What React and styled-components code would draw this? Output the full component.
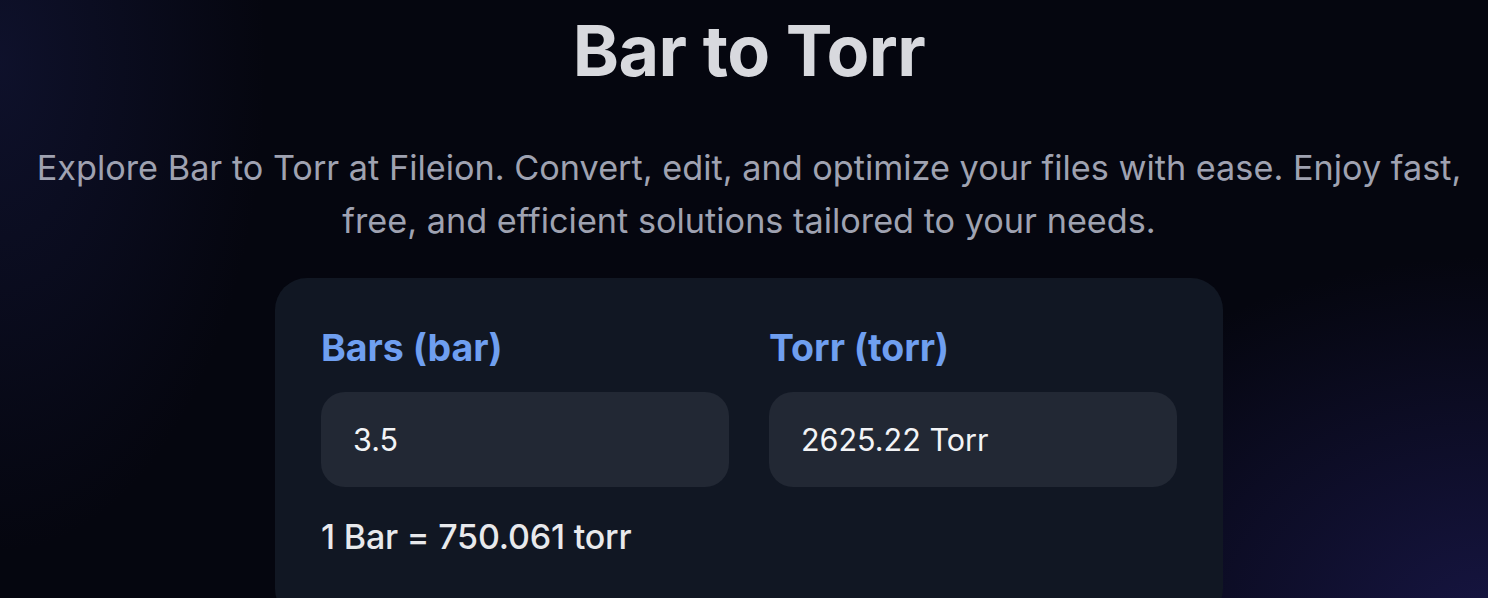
import React from "react";
import styled, { createGlobalStyle } from "styled-components";

const GlobalStyle = createGlobalStyle`
  html, body {
    margin: 0;
    padding: 0;
    background: #05060f;
  }
  body {
    font-family: Inter, "Noto Sans", sans-serif;
  }
`;

const Page = styled.div`
  min-height: 598px;
  box-sizing: border-box;
  padding: 12px 0 0 10px;
  display: flex;
  flex-direction: column;
  align-items: center;
  overflow: hidden;
  background:
    radial-gradient(ellipse 700px 520px at 100% 100%, rgba(28, 26, 82, 0.75), rgba(5, 6, 15, 0) 70%),
    radial-gradient(ellipse 380px 700px at 0% 10%, rgba(22, 26, 66, 0.55), rgba(5, 6, 15, 0) 70%),
    #05060f;
`;

const Title = styled.h1`
  margin: 0;
  font-size: 70px;
  line-height: 77px;
  font-weight: 700;
  color: #d8d9de;
  letter-spacing: -0.5px;
`;

const Lead = styled.p`
  margin: 52px 0 0;
  max-width: 1440px;
  text-align: center;
  font-size: 34.25px;
  line-height: 53px;
  font-weight: 400;
  color: #9fa2b1;
`;

const Card = styled.section`
  margin-top: 31px;
  width: 948px;
  box-sizing: border-box;
  padding: 50px 46px 60px;
  background: #111723;
  border-radius: 32px;
`;

const Fields = styled.div`
  display: grid;
  grid-template-columns: 1fr 1fr;
  gap: 40px;
`;

const Field = styled.div`
  display: flex;
  flex-direction: column;
  gap: 24px;
`;

const Label = styled.label`
  font-size: 37.5px;
  line-height: 40px;
  font-weight: 700;
  color: #6f9ff0;
`;

const ValueBox = styled.div`
  height: 95px;
  box-sizing: border-box;
  padding: 0 32px;
  display: flex;
  align-items: center;
  border-radius: 24px;
  background: #222834;
  font-size: 30.5px;
  color: #f3f4f6;
`;

const Rate = styled.p`
  margin: 26px 0 0;
  font-size: 34px;
  line-height: 48px;
  font-weight: 500;
  color: #e8e9ec;
  letter-spacing: -0.2px;
`;

export default function App() {
  return (
    <>
      <GlobalStyle />
      <Page>
        <Title>Bar to Torr</Title>
        <Lead>
          Explore Bar to Torr at Fileion. Convert, edit, and optimize your files with ease. Enjoy fast,
          free, and efficient solutions tailored to your needs.
        </Lead>
        <Card>
          <Fields>
            <Field>
              <Label>Bars (bar)</Label>
              <ValueBox>3.5</ValueBox>
            </Field>
            <Field>
              <Label>Torr (torr)</Label>
              <ValueBox>2625.22 Torr</ValueBox>
            </Field>
          </Fields>
          <Rate>1 Bar = 750.061 torr</Rate>
        </Card>
      </Page>
    </>
  );
}
